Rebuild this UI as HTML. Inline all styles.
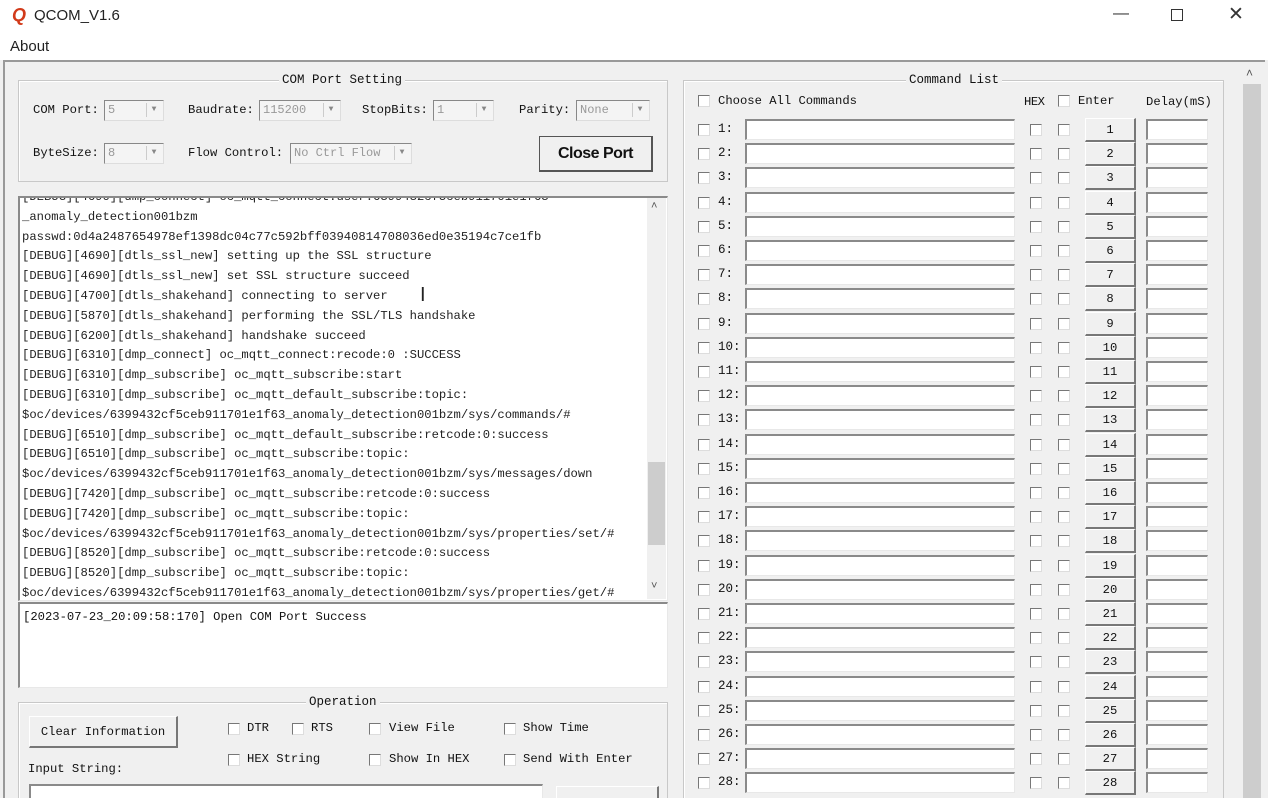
<!DOCTYPE html>
<html><head><meta charset="utf-8"><style>
*{box-sizing:border-box;margin:0;padding:0}
html{width:1268px;height:798px;overflow:hidden}
body{width:1268px;height:798px;overflow:hidden;background:#f0f0f0;position:relative;font-family:"Liberation Mono",monospace;font-size:12.2px;color:#111}
.a{position:absolute}
.ui{font-family:"Liberation Sans",sans-serif}
.grp{position:absolute;border:1px solid #c8c8c8;box-shadow:inset 1px 1px 0 #fff}
.gt{position:absolute;background:#f0f0f0;padding:0 3px;top:-8px;font-size:12.5px}
.cb{position:absolute;width:12px;height:12px;background:#fff;border-top:1px solid #777;border-left:1px solid #777;border-right:1px solid #ddd;border-bottom:1px solid #ddd}
.in{position:absolute;background:#fff;border-top:2px solid #8a8a8a;border-left:2px solid #8a8a8a;border-right:1px solid #e8e8e8;border-bottom:1px solid #e8e8e8}
.btn{position:absolute;background:#f0f0f0;border-top:1px solid #fff;border-left:1px solid #fff;border-right:2px solid #777;border-bottom:2px solid #777;text-align:center}
.sel{position:absolute;background:#f4f4f4;border-top:1px solid #888;border-left:1px solid #888;border-right:1px solid #ddd;border-bottom:1px solid #ddd;color:#999;padding-left:3px;font-size:12px;line-height:18px}
.sel i{position:absolute;right:2px;top:2px;width:15px;height:14px;border-left:1px solid #ccc;font-style:normal;font-size:8px;text-align:center;line-height:14px;color:#888}
.log div{height:19.8px;line-height:19.8px;white-space:nowrap;color:#222}
.row{position:absolute;left:0;height:24px;width:540px}
.row .cb{left:698px}
.row .a{font-size:12.5px}
</style></head><body>
<div class="a" style="left:0;top:0;width:1268px;height:33px;background:#fff"></div>
<div class="a ui" style="left:12px;top:5px;font-size:18px;font-weight:bold;color:#d23a1a;font-style:italic">Q</div>
<div class="a ui" style="left:34px;top:7px;font-size:15px;color:#222">QCOM_V1.6</div>
<div class="a ui" style="left:1113px;top:5px;font-size:16px;color:#333">&#8212;</div>
<div class="a" style="left:1171px;top:9px;width:12px;height:12px;border:1px solid #333"></div>
<div class="a ui" style="left:1228px;top:3px;font-size:19px;color:#333">&#10005;</div>
<div class="a" style="left:0;top:33px;width:1268px;height:27px;background:#fff"></div>
<div class="a ui" style="left:10px;top:38px;font-size:15px;color:#222">About</div>
<div class="a" style="left:3px;top:60px;width:1262px;height:740px;border-top:2px solid #999;border-left:2px solid #999"></div>

<div class="grp" style="left:18px;top:80px;width:650px;height:102px"><div class="gt" style="left:260px">COM Port Setting</div></div>
<div class="a" style="left:33px;top:103px">COM Port:</div><div class="sel" style="left:104px;top:100px;width:60px;height:21px">5<i>&#9660;</i></div>
<div class="a" style="left:188px;top:103px">Baudrate:</div><div class="sel" style="left:259px;top:100px;width:82px;height:21px">115200<i>&#9660;</i></div>
<div class="a" style="left:362px;top:103px">StopBits:</div><div class="sel" style="left:433px;top:100px;width:61px;height:21px">1<i>&#9660;</i></div>
<div class="a" style="left:519px;top:103px">Parity:</div><div class="sel" style="left:576px;top:100px;width:74px;height:21px">None<i>&#9660;</i></div>
<div class="a" style="left:33px;top:146px">ByteSize:</div><div class="sel" style="left:104px;top:143px;width:60px;height:21px">8<i>&#9660;</i></div>
<div class="a" style="left:188px;top:146px">Flow Control:</div><div class="sel" style="left:290px;top:143px;width:122px;height:21px">No Ctrl Flow<i>&#9660;</i></div>
<div class="btn ui" style="left:539px;top:136px;width:114px;height:36px;line-height:33px;font-size:16px;font-weight:bold;letter-spacing:-0.5px;border:1px solid #555;border-right:2px solid #555;border-bottom:2px solid #555">Close Port</div>

<div class="in log" style="left:18px;top:196px;width:650px;height:405px;overflow:hidden;padding-left:2px">
<div style="margin-top:-10px">[DEBUG][4690][dmp_connect] oc_mqtt_connect:user:6399432cf5ceb911701e1f63</div>
<div>_anomaly_detection001bzm</div>
<div>passwd:0d4a2487654978ef1398dc04c77c592bff03940814708036ed0e35194c7ce1fb</div>
<div>[DEBUG][4690][dtls_ssl_new] setting up the SSL structure</div>
<div>[DEBUG][4690][dtls_ssl_new] set SSL structure succeed</div>
<div>[DEBUG][4700][dtls_shakehand] connecting to server</div>
<div>[DEBUG][5870][dtls_shakehand] performing the SSL/TLS handshake</div>
<div>[DEBUG][6200][dtls_shakehand] handshake succeed</div>
<div>[DEBUG][6310][dmp_connect] oc_mqtt_connect:recode:0 :SUCCESS</div>
<div>[DEBUG][6310][dmp_subscribe] oc_mqtt_subscribe:start</div>
<div>[DEBUG][6310][dmp_subscribe] oc_mqtt_default_subscribe:topic:</div>
<div>$oc/devices/6399432cf5ceb911701e1f63_anomaly_detection001bzm/sys/commands/#</div>
<div>[DEBUG][6510][dmp_subscribe] oc_mqtt_default_subscribe:retcode:0:success</div>
<div>[DEBUG][6510][dmp_subscribe] oc_mqtt_subscribe:topic:</div>
<div>$oc/devices/6399432cf5ceb911701e1f63_anomaly_detection001bzm/sys/messages/down</div>
<div>[DEBUG][7420][dmp_subscribe] oc_mqtt_subscribe:retcode:0:success</div>
<div>[DEBUG][7420][dmp_subscribe] oc_mqtt_subscribe:topic:</div>
<div>$oc/devices/6399432cf5ceb911701e1f63_anomaly_detection001bzm/sys/properties/set/#</div>
<div>[DEBUG][8520][dmp_subscribe] oc_mqtt_subscribe:retcode:0:success</div>
<div>[DEBUG][8520][dmp_subscribe] oc_mqtt_subscribe:topic:</div>
<div>$oc/devices/6399432cf5ceb911701e1f63_anomaly_detection001bzm/sys/properties/get/#</div>
</div>
<div class="a" style="left:647px;top:198px;width:19px;height:401px;background:#f0f0f0"></div>
<div class="a" style="left:648px;top:462px;width:17px;height:83px;background:#cdcdcd"></div>
<div class="a ui" style="left:651px;top:200px;font-size:11px;color:#555">&#708;</div>
<div class="a ui" style="left:651px;top:580px;font-size:11px;color:#555">&#709;</div>

<div class="in" style="left:18px;top:602px;width:650px;height:86px;padding:6px 0 0 3px">[2023-07-23_20:09:58:170] Open COM Port Success</div>

<div class="grp" style="left:18px;top:702px;width:650px;height:110px"><div class="gt" style="left:287px">Operation</div></div>
<div class="btn" style="left:29px;top:716px;width:149px;height:32px;line-height:30px">Clear Information</div>
<div class="cb" style="left:228px;top:723px"></div><div class="a" style="left:247px;top:721px">DTR</div>
<div class="cb" style="left:292px;top:723px"></div><div class="a" style="left:311px;top:721px">RTS</div>
<div class="cb" style="left:369px;top:723px"></div><div class="a" style="left:389px;top:721px">View File</div>
<div class="cb" style="left:504px;top:723px"></div><div class="a" style="left:523px;top:721px">Show Time</div>
<div class="cb" style="left:228px;top:754px"></div><div class="a" style="left:247px;top:752px">HEX String</div>
<div class="cb" style="left:369px;top:754px"></div><div class="a" style="left:389px;top:752px">Show In HEX</div>
<div class="cb" style="left:504px;top:754px"></div><div class="a" style="left:523px;top:752px">Send With Enter</div>
<div class="a" style="left:28px;top:762px">Input String:</div>
<div class="in" style="left:29px;top:784px;width:514px;height:20px"></div>
<div class="btn" style="left:556px;top:786px;width:103px;height:20px"></div>

<div class="grp" style="left:683px;top:80px;width:541px;height:730px"><div class="gt" style="left:222px">Command List</div></div>
<div class="cb" style="left:698px;top:95px"></div><div class="a" style="left:718px;top:94px">Choose All Commands</div>
<div class="a" style="left:1024px;top:95px;letter-spacing:-0.5px">HEX</div>
<div class="cb" style="left:1058px;top:95px"></div><div class="a" style="left:1078px;top:94px">Enter</div>
<div class="a" style="left:1146px;top:95px">Delay(mS)</div>
<div class="a" style="left:1242px;top:66px;width:20px;height:732px;background:#f0f0f0"></div>
<div class="a" style="left:1243px;top:84px;width:18px;height:714px;background:#cdcdcd"></div>
<div class="a ui" style="left:1246px;top:66px;font-size:12px;color:#555">&#708;</div>

<div class="a" style="left:0;top:118px">
<div class="row" style="top:0"><div class="cb" style="top:6px"></div><div class="a" style="left:718px;top:4px">1:</div><div class="in" style="left:745px;top:1px;width:270px;height:21px"></div><div class="cb" style="left:1030px;top:6px"></div><div class="cb" style="left:1058px;top:6px"></div><div class="btn" style="left:1085px;top:0;width:51px;height:24px;line-height:22px">1</div><div class="in" style="left:1146px;top:1px;width:62px;height:21px"></div></div>
<div class="row" style="top:24.2px"><div class="cb" style="top:6px"></div><div class="a" style="left:718px;top:4px">2:</div><div class="in" style="left:745px;top:1px;width:270px;height:21px"></div><div class="cb" style="left:1030px;top:6px"></div><div class="cb" style="left:1058px;top:6px"></div><div class="btn" style="left:1085px;top:0;width:51px;height:24px;line-height:22px">2</div><div class="in" style="left:1146px;top:1px;width:62px;height:21px"></div></div>
<div class="row" style="top:48.4px"><div class="cb" style="top:6px"></div><div class="a" style="left:718px;top:4px">3:</div><div class="in" style="left:745px;top:1px;width:270px;height:21px"></div><div class="cb" style="left:1030px;top:6px"></div><div class="cb" style="left:1058px;top:6px"></div><div class="btn" style="left:1085px;top:0;width:51px;height:24px;line-height:22px">3</div><div class="in" style="left:1146px;top:1px;width:62px;height:21px"></div></div>
<div class="row" style="top:72.6px"><div class="cb" style="top:6px"></div><div class="a" style="left:718px;top:4px">4:</div><div class="in" style="left:745px;top:1px;width:270px;height:21px"></div><div class="cb" style="left:1030px;top:6px"></div><div class="cb" style="left:1058px;top:6px"></div><div class="btn" style="left:1085px;top:0;width:51px;height:24px;line-height:22px">4</div><div class="in" style="left:1146px;top:1px;width:62px;height:21px"></div></div>
<div class="row" style="top:96.8px"><div class="cb" style="top:6px"></div><div class="a" style="left:718px;top:4px">5:</div><div class="in" style="left:745px;top:1px;width:270px;height:21px"></div><div class="cb" style="left:1030px;top:6px"></div><div class="cb" style="left:1058px;top:6px"></div><div class="btn" style="left:1085px;top:0;width:51px;height:24px;line-height:22px">5</div><div class="in" style="left:1146px;top:1px;width:62px;height:21px"></div></div>
<div class="row" style="top:121px"><div class="cb" style="top:6px"></div><div class="a" style="left:718px;top:4px">6:</div><div class="in" style="left:745px;top:1px;width:270px;height:21px"></div><div class="cb" style="left:1030px;top:6px"></div><div class="cb" style="left:1058px;top:6px"></div><div class="btn" style="left:1085px;top:0;width:51px;height:24px;line-height:22px">6</div><div class="in" style="left:1146px;top:1px;width:62px;height:21px"></div></div>
<div class="row" style="top:145.2px"><div class="cb" style="top:6px"></div><div class="a" style="left:718px;top:4px">7:</div><div class="in" style="left:745px;top:1px;width:270px;height:21px"></div><div class="cb" style="left:1030px;top:6px"></div><div class="cb" style="left:1058px;top:6px"></div><div class="btn" style="left:1085px;top:0;width:51px;height:24px;line-height:22px">7</div><div class="in" style="left:1146px;top:1px;width:62px;height:21px"></div></div>
<div class="row" style="top:169.4px"><div class="cb" style="top:6px"></div><div class="a" style="left:718px;top:4px">8:</div><div class="in" style="left:745px;top:1px;width:270px;height:21px"></div><div class="cb" style="left:1030px;top:6px"></div><div class="cb" style="left:1058px;top:6px"></div><div class="btn" style="left:1085px;top:0;width:51px;height:24px;line-height:22px">8</div><div class="in" style="left:1146px;top:1px;width:62px;height:21px"></div></div>
<div class="row" style="top:193.6px"><div class="cb" style="top:6px"></div><div class="a" style="left:718px;top:4px">9:</div><div class="in" style="left:745px;top:1px;width:270px;height:21px"></div><div class="cb" style="left:1030px;top:6px"></div><div class="cb" style="left:1058px;top:6px"></div><div class="btn" style="left:1085px;top:0;width:51px;height:24px;line-height:22px">9</div><div class="in" style="left:1146px;top:1px;width:62px;height:21px"></div></div>
<div class="row" style="top:217.8px"><div class="cb" style="top:6px"></div><div class="a" style="left:718px;top:4px">10:</div><div class="in" style="left:745px;top:1px;width:270px;height:21px"></div><div class="cb" style="left:1030px;top:6px"></div><div class="cb" style="left:1058px;top:6px"></div><div class="btn" style="left:1085px;top:0;width:51px;height:24px;line-height:22px">10</div><div class="in" style="left:1146px;top:1px;width:62px;height:21px"></div></div>
<div class="row" style="top:242px"><div class="cb" style="top:6px"></div><div class="a" style="left:718px;top:4px">11:</div><div class="in" style="left:745px;top:1px;width:270px;height:21px"></div><div class="cb" style="left:1030px;top:6px"></div><div class="cb" style="left:1058px;top:6px"></div><div class="btn" style="left:1085px;top:0;width:51px;height:24px;line-height:22px">11</div><div class="in" style="left:1146px;top:1px;width:62px;height:21px"></div></div>
<div class="row" style="top:266.2px"><div class="cb" style="top:6px"></div><div class="a" style="left:718px;top:4px">12:</div><div class="in" style="left:745px;top:1px;width:270px;height:21px"></div><div class="cb" style="left:1030px;top:6px"></div><div class="cb" style="left:1058px;top:6px"></div><div class="btn" style="left:1085px;top:0;width:51px;height:24px;line-height:22px">12</div><div class="in" style="left:1146px;top:1px;width:62px;height:21px"></div></div>
<div class="row" style="top:290.4px"><div class="cb" style="top:6px"></div><div class="a" style="left:718px;top:4px">13:</div><div class="in" style="left:745px;top:1px;width:270px;height:21px"></div><div class="cb" style="left:1030px;top:6px"></div><div class="cb" style="left:1058px;top:6px"></div><div class="btn" style="left:1085px;top:0;width:51px;height:24px;line-height:22px">13</div><div class="in" style="left:1146px;top:1px;width:62px;height:21px"></div></div>
<div class="row" style="top:314.6px"><div class="cb" style="top:6px"></div><div class="a" style="left:718px;top:4px">14:</div><div class="in" style="left:745px;top:1px;width:270px;height:21px"></div><div class="cb" style="left:1030px;top:6px"></div><div class="cb" style="left:1058px;top:6px"></div><div class="btn" style="left:1085px;top:0;width:51px;height:24px;line-height:22px">14</div><div class="in" style="left:1146px;top:1px;width:62px;height:21px"></div></div>
<div class="row" style="top:338.8px"><div class="cb" style="top:6px"></div><div class="a" style="left:718px;top:4px">15:</div><div class="in" style="left:745px;top:1px;width:270px;height:21px"></div><div class="cb" style="left:1030px;top:6px"></div><div class="cb" style="left:1058px;top:6px"></div><div class="btn" style="left:1085px;top:0;width:51px;height:24px;line-height:22px">15</div><div class="in" style="left:1146px;top:1px;width:62px;height:21px"></div></div>
<div class="row" style="top:363px"><div class="cb" style="top:6px"></div><div class="a" style="left:718px;top:4px">16:</div><div class="in" style="left:745px;top:1px;width:270px;height:21px"></div><div class="cb" style="left:1030px;top:6px"></div><div class="cb" style="left:1058px;top:6px"></div><div class="btn" style="left:1085px;top:0;width:51px;height:24px;line-height:22px">16</div><div class="in" style="left:1146px;top:1px;width:62px;height:21px"></div></div>
<div class="row" style="top:387.2px"><div class="cb" style="top:6px"></div><div class="a" style="left:718px;top:4px">17:</div><div class="in" style="left:745px;top:1px;width:270px;height:21px"></div><div class="cb" style="left:1030px;top:6px"></div><div class="cb" style="left:1058px;top:6px"></div><div class="btn" style="left:1085px;top:0;width:51px;height:24px;line-height:22px">17</div><div class="in" style="left:1146px;top:1px;width:62px;height:21px"></div></div>
<div class="row" style="top:411.4px"><div class="cb" style="top:6px"></div><div class="a" style="left:718px;top:4px">18:</div><div class="in" style="left:745px;top:1px;width:270px;height:21px"></div><div class="cb" style="left:1030px;top:6px"></div><div class="cb" style="left:1058px;top:6px"></div><div class="btn" style="left:1085px;top:0;width:51px;height:24px;line-height:22px">18</div><div class="in" style="left:1146px;top:1px;width:62px;height:21px"></div></div>
<div class="row" style="top:435.6px"><div class="cb" style="top:6px"></div><div class="a" style="left:718px;top:4px">19:</div><div class="in" style="left:745px;top:1px;width:270px;height:21px"></div><div class="cb" style="left:1030px;top:6px"></div><div class="cb" style="left:1058px;top:6px"></div><div class="btn" style="left:1085px;top:0;width:51px;height:24px;line-height:22px">19</div><div class="in" style="left:1146px;top:1px;width:62px;height:21px"></div></div>
<div class="row" style="top:459.8px"><div class="cb" style="top:6px"></div><div class="a" style="left:718px;top:4px">20:</div><div class="in" style="left:745px;top:1px;width:270px;height:21px"></div><div class="cb" style="left:1030px;top:6px"></div><div class="cb" style="left:1058px;top:6px"></div><div class="btn" style="left:1085px;top:0;width:51px;height:24px;line-height:22px">20</div><div class="in" style="left:1146px;top:1px;width:62px;height:21px"></div></div>
<div class="row" style="top:484px"><div class="cb" style="top:6px"></div><div class="a" style="left:718px;top:4px">21:</div><div class="in" style="left:745px;top:1px;width:270px;height:21px"></div><div class="cb" style="left:1030px;top:6px"></div><div class="cb" style="left:1058px;top:6px"></div><div class="btn" style="left:1085px;top:0;width:51px;height:24px;line-height:22px">21</div><div class="in" style="left:1146px;top:1px;width:62px;height:21px"></div></div>
<div class="row" style="top:508.2px"><div class="cb" style="top:6px"></div><div class="a" style="left:718px;top:4px">22:</div><div class="in" style="left:745px;top:1px;width:270px;height:21px"></div><div class="cb" style="left:1030px;top:6px"></div><div class="cb" style="left:1058px;top:6px"></div><div class="btn" style="left:1085px;top:0;width:51px;height:24px;line-height:22px">22</div><div class="in" style="left:1146px;top:1px;width:62px;height:21px"></div></div>
<div class="row" style="top:532.4px"><div class="cb" style="top:6px"></div><div class="a" style="left:718px;top:4px">23:</div><div class="in" style="left:745px;top:1px;width:270px;height:21px"></div><div class="cb" style="left:1030px;top:6px"></div><div class="cb" style="left:1058px;top:6px"></div><div class="btn" style="left:1085px;top:0;width:51px;height:24px;line-height:22px">23</div><div class="in" style="left:1146px;top:1px;width:62px;height:21px"></div></div>
<div class="row" style="top:556.6px"><div class="cb" style="top:6px"></div><div class="a" style="left:718px;top:4px">24:</div><div class="in" style="left:745px;top:1px;width:270px;height:21px"></div><div class="cb" style="left:1030px;top:6px"></div><div class="cb" style="left:1058px;top:6px"></div><div class="btn" style="left:1085px;top:0;width:51px;height:24px;line-height:22px">24</div><div class="in" style="left:1146px;top:1px;width:62px;height:21px"></div></div>
<div class="row" style="top:580.8px"><div class="cb" style="top:6px"></div><div class="a" style="left:718px;top:4px">25:</div><div class="in" style="left:745px;top:1px;width:270px;height:21px"></div><div class="cb" style="left:1030px;top:6px"></div><div class="cb" style="left:1058px;top:6px"></div><div class="btn" style="left:1085px;top:0;width:51px;height:24px;line-height:22px">25</div><div class="in" style="left:1146px;top:1px;width:62px;height:21px"></div></div>
<div class="row" style="top:605px"><div class="cb" style="top:6px"></div><div class="a" style="left:718px;top:4px">26:</div><div class="in" style="left:745px;top:1px;width:270px;height:21px"></div><div class="cb" style="left:1030px;top:6px"></div><div class="cb" style="left:1058px;top:6px"></div><div class="btn" style="left:1085px;top:0;width:51px;height:24px;line-height:22px">26</div><div class="in" style="left:1146px;top:1px;width:62px;height:21px"></div></div>
<div class="row" style="top:629.2px"><div class="cb" style="top:6px"></div><div class="a" style="left:718px;top:4px">27:</div><div class="in" style="left:745px;top:1px;width:270px;height:21px"></div><div class="cb" style="left:1030px;top:6px"></div><div class="cb" style="left:1058px;top:6px"></div><div class="btn" style="left:1085px;top:0;width:51px;height:24px;line-height:22px">27</div><div class="in" style="left:1146px;top:1px;width:62px;height:21px"></div></div>
<div class="row" style="top:653.4px"><div class="cb" style="top:6px"></div><div class="a" style="left:718px;top:4px">28:</div><div class="in" style="left:745px;top:1px;width:270px;height:21px"></div><div class="cb" style="left:1030px;top:6px"></div><div class="cb" style="left:1058px;top:6px"></div><div class="btn" style="left:1085px;top:0;width:51px;height:24px;line-height:22px">28</div><div class="in" style="left:1146px;top:1px;width:62px;height:21px"></div></div>
</div>
<div class="a ui" style="left:420px;top:284px;font-size:20px;color:#222">I</div>
</body></html>
